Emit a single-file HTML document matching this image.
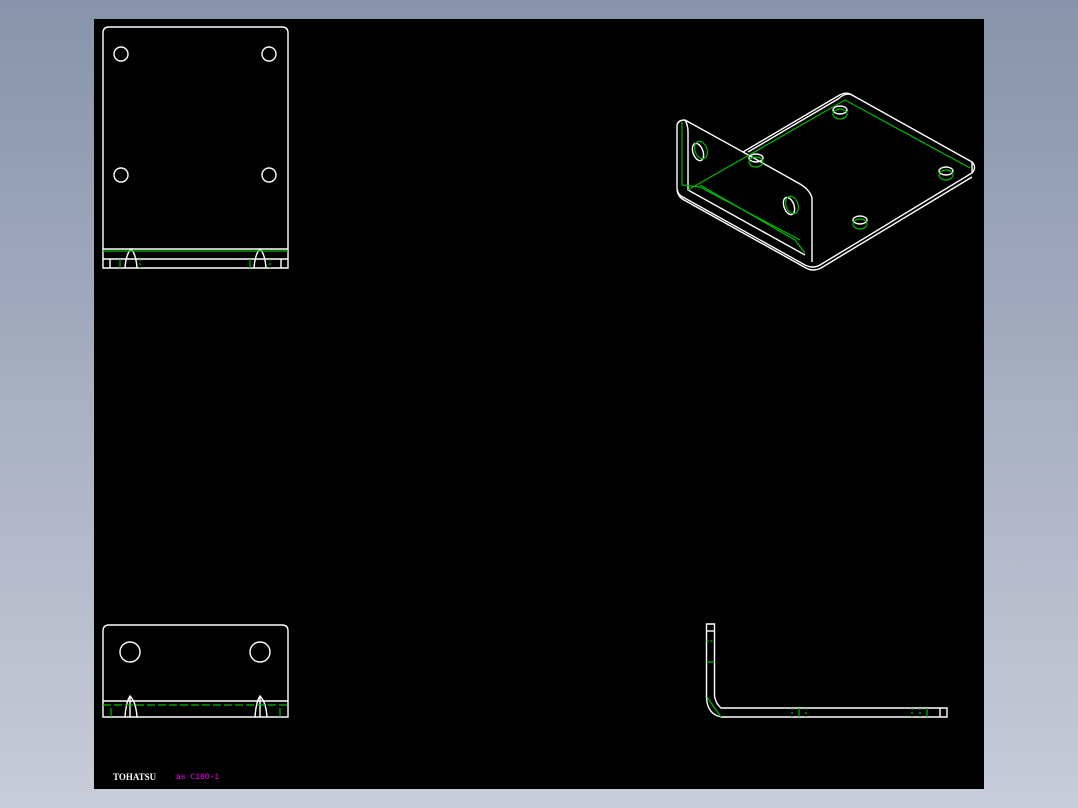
<!DOCTYPE html>
<html><head><style>
html,body{margin:0;padding:0;width:1078px;height:808px;overflow:hidden;background:linear-gradient(#8794a9,#c9ccd9);}
svg{position:absolute;left:0;top:0}
</style></head><body>
<svg width="1078" height="808" viewBox="0 0 1078 808">
<rect x="94" y="19" width="890" height="770" fill="#000"/>
<g fill="none" stroke="#fff" stroke-width="1.4">
<path d="M103,268 V33 Q103,27 109,27 H282 Q288,27 288,33 V268 Z"/>
<line x1="103" y1="259" x2="288" y2="259"/>
<line x1="103" y1="249" x2="288" y2="249"/>
<line x1="110" y1="259" x2="110" y2="268"/><line x1="281" y1="259" x2="281" y2="268"/>
<circle cx="121" cy="54" r="7"/><circle cx="269" cy="54" r="7"/>
<circle cx="121" cy="175" r="7"/><circle cx="269" cy="175" r="7"/>
<path d="M125,268 Q126,254 131,249 Q136,254 137,268"/>
<path d="M254,268 Q255,254 260,249 Q265,254 266,268"/>
<path d="M103,717 V631 Q103,625 109,625 H282 Q288,625 288,631 V717 Z"/>
<line x1="103" y1="701" x2="288" y2="701"/>
<circle cx="130" cy="652" r="10"/><circle cx="260" cy="652" r="10"/>
<path d="M125,717 Q126,702 130,696 Q136,702 137,717 M130,696 V717"/>
<path d="M255,717 Q256,702 260,696 Q266,702 267,717 M260,696 V717"/>
<path d="M706.5,624 H714.5 V696 Q716,704 721,708 H947 V717 H721 Q707,714 706.5,697 Z"/>
<line x1="706.5" y1="631" x2="714.5" y2="631"/>
<line x1="940" y1="708" x2="940" y2="717"/>
<path d="M685,120 L743,152 L838,96 Q846,91 852,95 L972,162 Q977,167 972,173 L820,265 Q813,269 805,265 L681,196 Q677,193 677,187 V125 Q678,120 685,120"/>
<path d="M677,190 Q678,197 684,200 L806,268 Q813,272 821,268 L972,177"/>
<path d="M685,120 Q688,125 688,132 V190 L805,255"/>
<path d="M743,152 L800,184 Q810,190 812,198 V262"/>
<path d="M852,95 Q846,92 838,99 L748,152"/>
<path d="M972,162 V172"/>
<ellipse cx="698" cy="152" rx="5" ry="9" transform="rotate(-20 698 152)"/>
<ellipse cx="789" cy="206" rx="5" ry="9" transform="rotate(-20 789 206)"/>
<ellipse cx="840" cy="110" rx="7" ry="4"/>
<ellipse cx="756" cy="158" rx="7" ry="4"/>
<ellipse cx="946" cy="171" rx="7" ry="4"/>
<ellipse cx="860" cy="220" rx="7" ry="4"/>
</g>
<g fill="none" stroke="#0b0" stroke-width="1.2">
<line x1="103" y1="251" x2="288" y2="251"/>
<line x1="103" y1="705" x2="288" y2="705" stroke-dasharray="8,3"/>
<line x1="120" y1="259" x2="120" y2="268"/><line x1="140" y1="259" x2="140" y2="268" stroke-dasharray="2,2"/>
<line x1="250" y1="259" x2="250" y2="268"/><line x1="270" y1="259" x2="270" y2="268" stroke-dasharray="2,2"/>
<line x1="111" y1="708" x2="111" y2="717"/><line x1="280" y1="708" x2="280" y2="717"/>
<line x1="706.5" y1="641" x2="714.5" y2="641" stroke-dasharray="2,2"/>
<line x1="706.5" y1="662" x2="714.5" y2="662"/>
<line x1="707" y1="697" x2="721" y2="717"/>
<line x1="792" y1="708" x2="792" y2="717" stroke-dasharray="2,2"/>
<line x1="799" y1="708" x2="799" y2="717"/>
<line x1="806" y1="708" x2="806" y2="717" stroke-dasharray="2,2"/>
<line x1="912" y1="708" x2="912" y2="717" stroke-dasharray="2,2"/>
<line x1="920" y1="708" x2="920" y2="717" stroke-dasharray="2,2"/>
<line x1="927" y1="708" x2="927" y2="717"/>
<path d="M682,122 V185 L700,187 L800,240"/>
<path d="M688,190 L845,100 L970,168"/>
<path d="M700,185 L795,240 L805,253"/>
<ellipse cx="701" cy="150" rx="6" ry="9" transform="rotate(-20 701 150)"/>
<ellipse cx="792" cy="205" rx="6" ry="9" transform="rotate(-20 792 205)"/>
<ellipse cx="840" cy="114" rx="7" ry="5"/>
<ellipse cx="756" cy="162" rx="7" ry="5"/>
<ellipse cx="946" cy="175" rx="7" ry="5"/>
<ellipse cx="860" cy="224" rx="7" ry="5"/>
</g>
<text x="113" y="780" fill="#fff" font-family="Liberation Serif, serif" font-weight="bold" font-size="9">TOHATSU</text>
<text x="176" y="779" fill="#f0f" font-family="Liberation Mono, monospace" font-size="8">as C100-1</text>
</svg>
</body></html>
